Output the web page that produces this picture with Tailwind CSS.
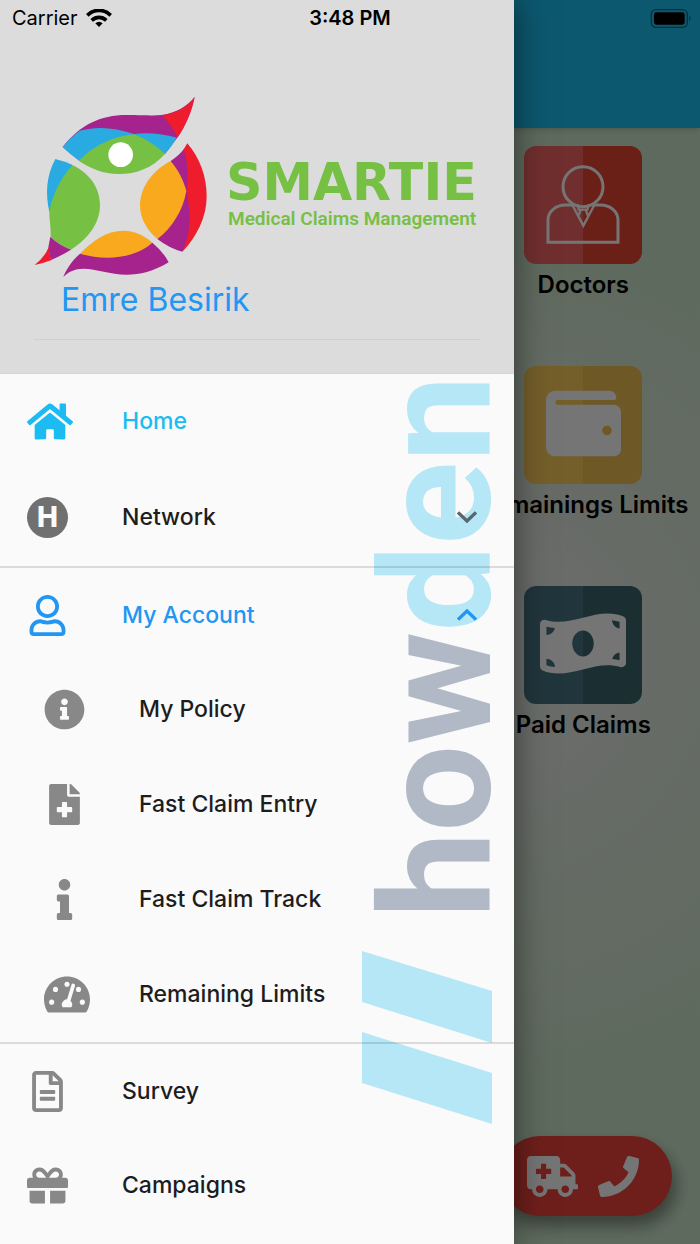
<!DOCTYPE html>
<html lang="en">
<head>
<meta charset="utf-8">
<meta name="viewport" content="width=device-width, initial-scale=1">
<title>Smartie</title>
<script src="https://cdn.jsdelivr.net/npm/@tailwindcss/browser@4"></script>
</head>
<body class="relative min-h-screen overflow-x-hidden bg-[#cee8cc] font-['Inter',sans-serif] text-[#1d1d1d]">

<!-- Home screen under the drawer -->
<div class="absolute inset-0 flex flex-col bg-[radial-gradient(circle_at_70%_53%,#e9efe7_0%,#e6ebe5_12%,#cee8cc_52%)]">
  <div class="z-10 h-32 shrink-0 bg-[#1cbff1] shadow-md"></div>
  <main class="grid grid-cols-3 gap-y-16 pt-[18px]">
    <a href="#doctors" class="col-start-3 flex flex-col items-center gap-1 text-[24px] font-semibold text-black">
      <span class="flex size-[118px] items-center justify-center rounded-xl bg-linear-to-r from-[#f46864] from-50% to-[#e94634] to-50%">
        <svg class="h-[80px] w-[76px]" viewBox="0 -4 228 240" fill="none" stroke="#fff" stroke-width="9">
          <circle cx="114" cy="61" r="60"/>
          <path d="M82 116H62C32 116 9 135 9 162v66h210v-66c0-27-23-46-53-46h-20"/>
          <path d="M82 116l33 62 33-62M97 114l4 16h26l5-16M107 130l-6 17M122 130l6 17" stroke-width="7"/>
        </svg>
      </span>
      <span class="leading-[34px]">Doctors</span>
    </a>
    <a href="#limits" class="col-start-3 flex flex-col items-center gap-1 text-[24px] font-semibold text-black">
      <span class="flex size-[118px] items-center justify-center rounded-xl bg-linear-to-r from-[#fdce5c] from-50% to-[#eec054] to-50%">
        <svg class="mb-1 size-[75px]" viewBox="0 0 512 512" fill="#fff"><path d="M461.200 128H80c-8.840 0-16-7.160-16-16s7.160-16 16-16h384c8.840 0 16-7.160 16-16 0-26.510-21.490-48-48-48H64C28.650 32 0 60.650 0 96v320c0 35.350 28.650 64 64 64h397.200c28.020 0 50.800-21.530 50.800-48V176c0-26.470-22.780-48-50.800-48zM416 336c-17.670 0-32-14.330-32-32s14.330-32 32-32 32 14.330 32 32-14.330 32-32 32z"/></svg>
      </span>
      <span class="leading-[34px] whitespace-nowrap">Remainings Limits</span>
    </a>
    <a href="#claims" class="col-start-3 flex flex-col items-center gap-1 text-[24px] font-semibold text-black">
      <span class="flex size-[118px] items-center justify-center rounded-xl bg-linear-to-r from-[#487583] from-50% to-[#3c666d] to-50%">
        <svg class="mb-1 h-[69px] w-[86px]" viewBox="0 0 640 512" fill="#fff"><path d="M621.160 54.460C582.370 38.190 543.550 32 504.750 32c-123.170-.01-246.330 62.340-369.500 62.340-30.890 0-61.760-3.920-92.650-13.720-3.470-1.100-6.950-1.620-10.350-1.620C15.040 79 0 92.320 0 110.810v317.260c0 12.630 7.230 24.600 18.840 29.460C57.630 473.810 96.450 480 135.250 480c123.170 0 246.340-62.350 369.510-62.350 30.890 0 61.760 3.920 92.650 13.720 3.470 1.100 6.950 1.620 10.350 1.620 17.210 0 32.250-13.320 32.250-31.810V83.930c-.01-12.640-7.240-24.600-18.850-29.470zM48 132.220c20.120 5.040 41.120 7.570 62.720 8.930C104.840 170.540 79 192.690 48 192.690v-60.470zm0 285v-47.780c34.370 0 62.180 27.270 63.710 61.400-22.530-1.810-43.590-6.310-63.710-13.620zM320 352c-44.190 0-80-42.990-80-96 0-53.020 35.820-96 80-96s80 42.980 80 96c0 53.030-35.830 96-80 96zm272 27.780c-17.520-4.390-35.710-6.850-54.320-8.440 5.870-26.080 27.500-45.880 54.320-49.280v57.720zm0-236.110c-30.890-3.910-54.860-29.700-55.810-61.550 19.540 2.170 38.090 6.230 55.810 12.660v48.890z"/></svg>
      </span>
      <span class="leading-[34px]">Paid Claims</span>
    </a>
  </main>
  <button aria-label="Emergency call" class="mt-auto mr-7 mb-7 flex h-20 w-[172px] items-center justify-center gap-5 self-end rounded-full bg-[#f1453b] pr-1.5 shadow-[4px_10px_16px_rgba(0,0,0,0.4)]">
    <svg class="h-[41px] w-[51px]" viewBox="0 0 640 512" fill="#fff"><path d="M624 352h-16V243.900c0-12.700-5.100-24.900-14.100-33.900L494 110.100c-9-9-21.200-14.100-33.900-14.100H416V48c0-26.500-21.500-48-48-48H48C21.500 0 0 21.500 0 48v320c0 26.500 21.500 48 48 48h16c0 53 43 96 96 96s96-43 96-96h128c0 53 43 96 96 96s96-43 96-96h48c8.800 0 16-7.200 16-16v-32c0-8.800-7.200-16-16-16zM160 464c-26.500 0-48-21.500-48-48s21.500-48 48-48 48 21.500 48 48-21.500 48-48 48zm144-248c0 4.400-3.600 8-8 8h-56v56c0 4.400-3.600 8-8 8h-48c-4.400 0-8-3.600-8-8v-56h-56c-4.400 0-8-3.600-8-8v-48c0-4.400 3.600-8 8-8h56v-56c0-4.400 3.600-8 8-8h48c4.400 0 8 3.600 8 8v56h56c4.400 0 8 3.600 8 8v48zm176 248c-26.500 0-48-21.500-48-48s21.500-48 48-48 48 21.500 48 48-21.500 48-48 48zm80-208H416V144h44.100l99.900 99.900V256z"/></svg>
    <svg class="size-[41px]" viewBox="0 0 512 512" fill="#fff"><path d="M493.400 24.600l-104-24c-11.300-2.600-22.900 3.300-27.500 13.900l-48 112c-4.200 9.800-1.400 21.300 6.900 28l60.600 49.600c-36 76.700-98.900 140.500-177.200 177.200l-49.600-60.600c-6.800-8.300-18.200-11.100-28-6.900l-112 48C3.900 366.500-2 378.100.6 389.400l24 104C27.100 504.200 36.700 512 48 512c256.100 0 464-207.500 464-464 0-11.200-7.700-20.900-18.600-23.400z"/></svg>
  </button>
</div>
<div class="absolute inset-0 z-10 bg-black/54"></div>

<!-- Status bar -->
<div class="absolute inset-x-0 top-0 z-30 grid h-9 grid-cols-3 items-center px-2 text-[20px] text-black">
  <div class="flex items-center gap-2 pl-1">
    <span>Carrier</span>
    <svg class="h-[19px] w-[26px]" viewBox="0 3 78 57" fill="none" stroke="#000" stroke-width="11">
      <path d="M4 22C24 2 54 2 74 22"/><path d="M17 37C30 25 48 25 61 37"/><path d="M28 46Q39 37 50 46L39 57z" fill="#000" stroke="none"/>
    </svg>
  </div>
  <span class="text-center font-semibold">3:48 PM</span>
  <svg class="h-[19px] w-[42px] justify-self-end" viewBox="0 0 126 57">
    <rect x="4" y="2" width="108" height="53" rx="14" fill="none" stroke="#000" stroke-opacity=".45" stroke-width="4"/>
    <rect x="12" y="10" width="92" height="37" rx="7"/>
    <path d="M118 20q7 8 0 17z" fill-opacity=".5"/>
  </svg>
</div>

<!-- Navigation drawer -->
<aside class="relative z-20 min-h-screen w-[514px] max-w-full bg-[#fafafa] shadow-[0_0_32px_rgba(0,0,0,0.5)]">
  <header class="flex h-[374px] flex-col border-b border-[#d6d6d6] bg-[#dcdcdc] px-[34px] pt-24">
    <svg class="h-[182px] w-full" viewBox="102 288 1338 546" preserveAspectRatio="xMinYMin meet" role="img" aria-label="Smartie Medical Claims Management">
      <path fill="#a6228c" d="M188 441C240 375 300 345 380 345C430 345 460 348 485 345C530 338 560 320 584 291C575 335 558 375 533 412L495 462L238 482z"/>
      <path fill="#29abe2" d="M188 441Q210 412 240 392C295 378 345 384 402 402C445 397 490 402 530 413Q515 440 495 462L238 482Q210 464 188 441z"/>
      <path fill="#ee1c2c" d="M584 291C560 325 525 341 485 346Q515 375 533 412C560 372 575 332 584 291z"/>
      <path fill="#76c044" d="M236 482C285 433 345 408 402 403C440 418 470 438 495 462C455 505 410 522 357 522C310 522 270 505 236 482z"/>
      <circle cx="362" cy="464" r="37" fill="#fff"/>
      <path fill="#29abe2" d="M166 477Q192 483 218 495L148 637C136 580 138 530 166 477z"/>
      <path fill="#76c044" d="M218 496C180 535 155 590 148 637C148 660 153 680 152 710C170 728 190 740 213 749C265 715 300 670 300 615C300 565 270 520 218 496z"/>
      <path fill="#a6228c" d="M151 710C170 728 190 740 213 749Q182 768 152 781L145 742z"/>
      <path fill="#ee1c2c" d="M104 795Q135 770 146 742L153 781Q130 790 104 795z"/>
      <path fill="#ee1c2c" d="M562 430C600 475 620 530 620 590C620 650 590 710 547 755L551 448z"/>
      <path fill="#a6228c" d="M512 483Q538 466 551 448C564 490 566 530 559 573C574 640 572 700 547 755Q508 745 472 717z"/>
      <path fill="#f9a91d" d="M512 483C535 510 550 540 559 573C550 630 515 685 472 717C440 690 420 655 420 615C420 560 460 510 512 483z"/>
      <path fill="#a6228c" d="M190 831C200 805 218 780 240 761L457 728Q490 755 506 787C460 815 420 824 380 824C330 824 290 806 250 806C225 806 205 815 190 831z"/>
      <path fill="#f9a91d" d="M240 761C280 720 320 692 370 692C405 692 435 708 457 728C400 778 310 782 240 761z"/>
      <text x="678" y="600" font-size="152" font-weight="700" font-family="DejaVu Sans" fill="#76c044">SMARTIE</text>
      <text x="684" y="674" font-size="57" font-weight="600" font-family="Roboto" fill="#76c044">Medical Claims Management</text>
    </svg>
    <h1 class="pl-[27px] text-[32px] leading-[44px] text-[#2196f3]">Emre Besirik</h1>
    <hr class="mt-[17px] border-[#d0d0d0]">
  </header>

  <nav class="relative text-[23px] font-medium">
    <svg class="absolute top-0 right-[22px] h-[760px] w-[132px]" viewBox="0 0 132 760" aria-hidden="true">
      <text transform="translate(130 544) rotate(-90)" font-family="Roboto" font-weight="700" font-size="154" fill="#b0b9c5">how<tspan fill="#b5e7f7">den</tspan></text>
      <path fill="#b5e7f7" d="M2 577L132 617V669L2 628zM2 658L132 699V750L2 709z"/>
    </svg>
    <div class="relative">
      <a href="#home" class="flex h-[94px] items-center pl-[27px] text-[#1cbcf2]">
        <span class="w-[95px]"><svg class="h-[41px] w-[46px]" viewBox="0 0 576 512" fill="currentColor"><path d="M280.370 148.260L96 300.110V464a16 16 0 0 0 16 16l112.060-.29a16 16 0 0 0 15.920-16V368a16 16 0 0 1 16-16h64a16 16 0 0 1 16 16v95.640a16 16 0 0 0 16 16.050L464 480a16 16 0 0 0 16-16V300L295.670 148.260a12.190 12.190 0 0 0-15.300 0zM571.600 251.470L488 182.560V44.050a12 12 0 0 0-12-12h-56a12 12 0 0 0-12 12v72.610L318.470 43a48 48 0 0 0-61 0L4.340 251.470a12 12 0 0 0-1.600 16.900l25.500 31A12 12 0 0 0 45.150 301l235.220-193.740a12.190 12.190 0 0 1 15.300 0L530.900 301a12 12 0 0 0 16.900-1.600l25.500-31a12 12 0 0 0-1.700-16.930z"/></svg></span>
        Home
      </a>
      <button class="flex h-[98px] w-full items-center pr-[37px] pl-[27px]" aria-expanded="false">
        <span class="flex w-[95px]"><span class="flex size-[41px] items-center justify-center rounded-full bg-[#707070] text-[28px] font-extrabold text-[#fafafa]">H</span></span>
        Network
        <svg class="ml-auto h-3 w-5" viewBox="0 0 60 36" fill="none" stroke="#5a686d" stroke-width="10"><path d="M3 4l27 26L57 4"/></svg>
      </button>
      <hr class="border-t-2 border-black/12">
      <button class="flex h-[94px] w-full items-center pr-[37px] pl-[27px] text-[#2196f3]" aria-expanded="true">
        <span class="w-[95px] pl-[2px]"><svg class="h-[41px] w-[37px]" viewBox="0 0 448 512" fill="currentColor"><path d="M313.600 304c-28.700 0-42.500 16-89.600 16-47.100 0-60.800-16-89.600-16C60.200 304 0 364.200 0 438.400V464c0 26.500 21.500 48 48 48h352c26.500 0 48-21.500 48-48v-25.600c0-74.200-60.200-134.400-134.400-134.400zM400 464H48v-25.600c0-47.600 38.800-86.400 86.400-86.400 14.600 0 38.300 16 89.600 16 51.700 0 74.900-16 89.600-16 47.600 0 86.400 38.800 86.400 86.400V464zM224 288c79.500 0 144-64.500 144-144S303.500 0 224 0 80 64.500 80 144s64.500 144 144 144zm0-240c52.900 0 96 43.100 96 96s-43.100 96-96 96-96-43.100-96-96 43.100-96 96-96z"/></svg></span>
        My Account
        <svg class="ml-auto h-3 w-5" viewBox="0 0 60 36" fill="none" stroke="currentColor" stroke-width="10"><path d="M3 32L30 6l27 26"/></svg>
      </button>
      <a href="#policy" class="flex h-[95px] items-center pl-11">
        <span class="w-[95px] text-[#888]"><svg class="size-[41px]" viewBox="0 0 512 512" fill="currentColor"><path d="M256 8C119.043 8 8 119.083 8 256c0 136.997 111.043 248 248 248s248-111.003 248-248C504 119.083 392.957 8 256 8zm0 110c23.196 0 42 18.804 42 42s-18.804 42-42 42-42-18.804-42-42 18.804-42 42-42zm56 254c0 6.627-5.373 12-12 12h-88c-6.627 0-12-5.373-12-12v-24c0-6.627 5.373-12 12-12h12v-64h-12c-6.627 0-12-5.373-12-12v-24c0-6.627 5.373-12 12-12h64c6.627 0 12 5.373 12 12v100h12c6.627 0 12 5.373 12 12v24z"/></svg></span>
        My Policy
      </a>
      <a href="#claim-entry" class="flex h-[95px] items-center pl-11">
        <span class="w-[95px] text-[#888]"><svg class="size-[41px]" viewBox="-64 0 512 512" fill="currentColor"><path d="M377 105L279.100 7c-4.500-4.500-10.600-7-17-7H256v128h128v-6.100c0-6.300-2.500-12.400-7-16.900zm-153 31V0H24C10.700 0 0 10.700 0 24v464c0 13.300 10.700 24 24 24h336c13.300 0 24-10.700 24-24V160H248c-13.200 0-24-10.800-24-24zm64 160v48c0 4.400-3.600 8-8 8h-56v56c0 4.400-3.600 8-8 8h-48c-4.400 0-8-3.600-8-8v-56h-56c-4.400 0-8-3.600-8-8v-48c0-4.400 3.600-8 8-8h56v-56c0-4.400 3.600-8 8-8h48c4.400 0 8 3.600 8 8v56h56c4.400 0 8 3.600 8 8z"/></svg></span>
        Fast Claim Entry
      </a>
      <a href="#claim-track" class="flex h-[95px] items-center pl-11">
        <span class="w-[95px] text-[#888]"><svg class="size-[41px]" viewBox="-160 0 512 512" fill="currentColor"><path d="M20 424.229h20V279.771H20c-11.046 0-20-8.954-20-20V212c0-11.046 8.954-20 20-20h112c11.046 0 20 8.954 20 20v212.229h20c11.046 0 20 8.954 20 20V492c0 11.046-8.954 20-20 20H20c-11.046 0-20-8.954-20-20v-47.771c0-11.046 8.954-20 20-20zM96 0C56.235 0 24 32.235 24 72s32.235 72 72 72 72-32.235 72-72S135.764 0 96 0z"/></svg></span>
        Fast Claim Track
      </a>
      <a href="#remaining" class="flex h-[95px] items-center pl-11">
        <span class="w-[95px] text-[#888]"><svg class="h-[41px] w-[46px]" viewBox="0 0 576 512" fill="currentColor"><path d="M288 32C128.940 32 0 160.940 0 320c0 52.800 14.250 102.260 39.060 144.800 5.610 9.620 16.300 15.200 27.440 15.200h443c11.140 0 21.830-5.580 27.440-15.200C561.750 422.260 576 372.800 576 320c0-159.060-128.940-288-288-288z"/><g fill="#fafafa"><circle cx="96" cy="352" r="32"/><circle cx="144" cy="192" r="32"/><circle cx="288" cy="128" r="32"/><circle cx="432" cy="192" r="32"/><circle cx="480" cy="352" r="32"/></g><path d="M366 142L302 345" stroke="#888" stroke-width="76" stroke-linecap="round"/><path d="M366 142L302 352" stroke="#fafafa" stroke-width="46" stroke-linecap="round"/><path fill="#fafafa" d="M233 416a64 64 0 1 1 110 0z"/></svg></span>
        Remaining Limits
      </a>
      <hr class="border-t-2 border-black/12">
      <a href="#survey" class="flex h-[94px] items-center pl-[27px]">
        <span class="w-[95px] text-[#888]"><svg class="size-[41px]" viewBox="-64 0 512 512" fill="currentColor"><path d="M288 248v28c0 6.600-5.400 12-12 12H108c-6.600 0-12-5.400-12-12v-28c0-6.600 5.400-12 12-12h168c6.600 0 12 5.400 12 12zm-12 72H108c-6.600 0-12 5.400-12 12v28c0 6.600 5.400 12 12 12h168c6.600 0 12-5.400 12-12v-28c0-6.600-5.400-12-12-12zm108-188.100V464c0 26.500-21.500 48-48 48H48c-26.500 0-48-21.500-48-48V48C0 21.500 21.500 0 48 0h204.100C264.800 0 277 5.100 286 14.100L369.900 98c9 8.900 14.100 21.200 14.100 33.900zm-128-80V128h76.100L256 51.900zM336 464V176H232c-13.300 0-24-10.700-24-24V48H48v416h288z"/></svg></span>
        Survey
      </a>
      <a href="#campaigns" class="flex h-[94px] items-center pl-[27px]">
        <span class="w-[95px] text-[#888]"><svg class="size-[41px]" viewBox="0 0 512 512" fill="currentColor"><path d="M32 448c0 17.700 14.300 32 32 32h160V320H32v128zm256 32h160c17.700 0 32-14.300 32-32V320H288v160zm192-320h-42.100c6.200-12.100 10.100-25.500 10.100-40 0-48.500-39.500-88-88-88-41.600 0-68.500 21.300-103 68.300-34.500-47-61.400-68.300-103-68.300-48.500 0-88 39.500-88 88 0 14.500 3.800 27.900 10.100 40H32c-17.700 0-32 14.300-32 32v80c0 8.800 7.200 16 16 16h480c8.800 0 16-7.200 16-16v-80c0-17.700-14.300-32-32-32zm-326.100 0c-22.100 0-40-17.900-40-40s17.900-40 40-40c19.900 0 34.600 3.300 86.100 80h-86.100zm206.100 0h-86.100c51.400-76.500 65.700-80 86.100-80 22.100 0 40 17.900 40 40s-17.900 40-40 40z"/></svg></span>
        Campaigns
      </a>
    </div>
  </nav>
</aside>
</body>
</html>
